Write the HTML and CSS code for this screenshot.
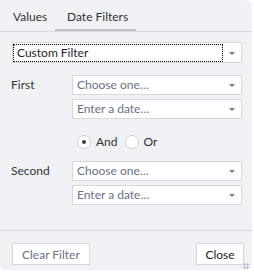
FILE: index.html
```html
<!DOCTYPE html>
<html lang="en">
<head>
    <meta charset="UTF-8">
    <title>Date Filters</title>
    <link rel="stylesheet" href="styles.css">
</head>
<body>
    <div class="filter-panel">
        <div class="filter-tabs">
            <div class="tab">Values</div>
            <div class="tab active">Date Filters</div>
        </div>
        <div class="filter-body">
            <div class="combo main-combo">
                <span class="combo-text focused">Custom Filter</span>
                <span class="combo-arrow"></span>
            </div>

            <div class="cond-group">
                <div class="cond-label">First</div>
                <div class="cond-fields">
                    <div class="combo"><span class="combo-text placeholder">Choose one…</span><span class="combo-arrow"></span></div>
                    <div class="combo"><span class="combo-text placeholder">Enter a date…</span><span class="combo-arrow"></span></div>
                </div>
            </div>

            <div class="radio-row">
                <label class="radio checked"><span class="radio-dot"></span>And</label>
                <label class="radio"><span class="radio-dot"></span>Or</label>
            </div>

            <div class="cond-group">
                <div class="cond-label">Second</div>
                <div class="cond-fields">
                    <div class="combo"><span class="combo-text placeholder">Choose one…</span><span class="combo-arrow"></span></div>
                    <div class="combo"><span class="combo-text placeholder">Enter a date…</span><span class="combo-arrow"></span></div>
                </div>
            </div>
        </div>
        <div class="filter-footer">
            <button class="btn disabled">Clear Filter</button>
            <button class="btn close-btn">Close</button>
        </div>
        <div class="resize-grip"></div>
    </div>
</body>
</html>
```

FILE: styles.css
```css
body {
    margin: 0;
    padding: 0;
    background-color: #fff;
    font-family: Lato, "Liberation Sans", sans-serif;
    font-size: 12px;
    color: #333;
}
.filter-panel {
    position: relative;
    width: 252px;
    height: 270px;
    background-color: #f0f1f5;
    border-radius: 0 6px 6px 6px;
    display: flex;
    flex-direction: column;
}
.filter-tabs {
    display: flex;
    height: 32px;
    border-bottom: 1px solid #d8d9de;
    box-sizing: border-box;
}
.tab {
    padding: 9px 12px 0 12px;
    box-sizing: border-box;
    height: 31px;
    white-space: nowrap;
    border-bottom: 2px solid transparent;
}
.tab:first-child {
    padding-left: 13px;
    width: 55px;
}
.tab.active {
    width: 81px;
    border-bottom-color: #c3c4c9;
}
.filter-body {
    flex: 1;
    padding: 10px 10px 0 12px;
}
.combo {
    display: flex;
    align-items: center;
    height: 20px;
    box-sizing: border-box;
    background-color: #fff;
    border: 1px solid #d7d8dd;
    margin-bottom: 4px;
}
.main-combo {
    height: 21px;
    margin-bottom: 12px;
}
.combo-text {
    flex: 1;
    padding-left: 4px;
    line-height: 16px;
    white-space: nowrap;
}
.combo-text.focused {
    margin: 1px 0 1px 0;
    padding-left: 3px;
    border: 1px dotted #000;
    color: #1e1e2a;
}
.combo-text.placeholder {
    color: #6c7085;
}
.combo-arrow {
    width: 18px;
    height: 100%;
    position: relative;
}
.combo-arrow::after {
    content: "";
    position: absolute;
    left: 6px;
    top: 50%;
    margin-top: -1px;
    border-left: 3px solid transparent;
    border-right: 3px solid transparent;
    border-top: 3px solid #7a7c86;
}
.cond-group {
    display: flex;
}
.cond-label {
    width: 60px;
    line-height: 20px;
    margin-left: -1px;
    flex-shrink: 0;
    margin-right: 1px;
}
.cond-fields {
    width: 170px;
}
.radio-row {
    display: flex;
    gap: 7px;
    padding-left: 65px;
    margin: 11px 0 11px 0;
    line-height: 16px;
}
.radio {
    display: flex;
    align-items: center;
    gap: 5px;
}
.radio-dot {
    width: 14px;
    height: 14px;
    box-sizing: border-box;
    border: 1px solid #cfd0d5;
    border-radius: 50%;
    background-color: #fff;
    position: relative;
}
.radio.checked .radio-dot::after {
    content: "";
    position: absolute;
    left: 4px;
    top: 4px;
    width: 4px;
    height: 4px;
    border-radius: 50%;
    background-color: #3a3a3a;
}
.filter-footer {
    display: flex;
    justify-content: space-between;
    border-top: 1px solid #d8d9de;
    height: 40px;
    box-sizing: border-box;
    padding: 12px 8px 0 12px;
}
.btn {
    height: 22px;
    box-sizing: border-box;
    background-color: #fff;
    border: 1px solid #d7d8dd;
    font-family: inherit;
    font-size: 12px;
    color: #222;
    padding: 0 9px;
}
.close-btn {
    width: 48px;
    padding: 0;
}
.btn.disabled {
    color: #6c7085;
}
.resize-grip {
    position: absolute;
    right: 3px;
    bottom: 1px;
    width: 6px;
    height: 6px;
    background-image: radial-gradient(circle, #c3c4c9 1px, transparent 1.2px);
    background-size: 3px 3px;
}
```
